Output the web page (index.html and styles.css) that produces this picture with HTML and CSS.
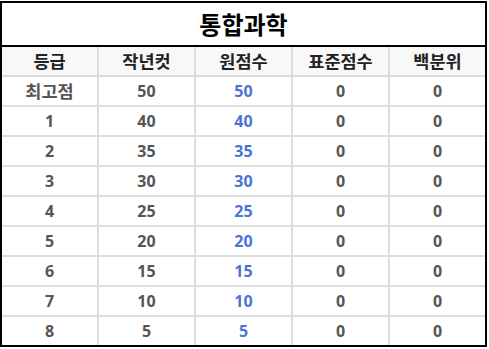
FILE: index.html
```html
<!DOCTYPE html>
<html lang="ko">
<head>
<meta charset="utf-8">
<link rel="stylesheet" href="styles.css">
</head>
<body>
<table class="score">
  <colgroup>
    <col class="c"><col class="c"><col class="c"><col class="c"><col class="c-last">
  </colgroup>
  <thead>
    <tr><th class="title" colspan="5">통합과학</th></tr>
    <tr class="head">
      <th>등급</th><th>작년컷</th><th>원점수</th><th>표준점수</th><th>백분위</th>
    </tr>
  </thead>
  <tbody>
    <tr><td class="ko">최고점</td><td>50</td><td class="raw">50</td><td>0</td><td>0</td></tr>
    <tr><td>1</td><td>40</td><td class="raw">40</td><td>0</td><td>0</td></tr>
    <tr><td>2</td><td>35</td><td class="raw">35</td><td>0</td><td>0</td></tr>
    <tr><td>3</td><td>30</td><td class="raw">30</td><td>0</td><td>0</td></tr>
    <tr><td>4</td><td>25</td><td class="raw">25</td><td>0</td><td>0</td></tr>
    <tr><td>5</td><td>20</td><td class="raw">20</td><td>0</td><td>0</td></tr>
    <tr><td>6</td><td>15</td><td class="raw">15</td><td>0</td><td>0</td></tr>
    <tr><td>7</td><td>10</td><td class="raw">10</td><td>0</td><td>0</td></tr>
    <tr><td>8</td><td>5</td><td class="raw">5</td><td>0</td><td>0</td></tr>
  </tbody>
</table>
</body>
</html>
```
FILE: styles.css
```css
html, body {
  margin: 0;
  padding: 0;
  background: #fff;
}
body {
  padding-top: 1px;
  font-family: "Open Sans", "Noto Sans CJK KR", sans-serif;
}
.score {
  width: 487px;
  table-layout: fixed;
  border-collapse: separate;
  border-spacing: 0;
  border: 2px solid #000;
}
.c { width: 97px; }
.c-last { width: 95px; }
.score th,
.score td {
  padding: 0;
  text-align: center;
  font-weight: 700;
  font-size: 16px;
  border-right: 2px solid #ddd;
  border-bottom: 2px solid #ddd;
  height: 28px;
  line-height: 28px;
}
.score th:last-child,
.score td:last-child {
  border-right: 0;
}
.score tbody tr:last-child td {
  border-bottom: 0;
}
.score th.title {
  height: 42px;
  line-height: 42px;
  font-size: 24px;
  color: #000;
  border-right: 0;
  border-bottom: 2px solid #000;
  font-family: "Noto Sans CJK KR", sans-serif;
}
.head th {
  background: #f8f8f8;
  color: #222;
  font-family: "Noto Sans CJK KR", sans-serif;
  font-size: 17.5px;
}
.score td {
  color: #555;
}
.score td.ko {
  font-family: "Noto Sans CJK KR", sans-serif;
  font-size: 17.5px;
}
.score td.raw {
  color: #4a74d6;
}
```
